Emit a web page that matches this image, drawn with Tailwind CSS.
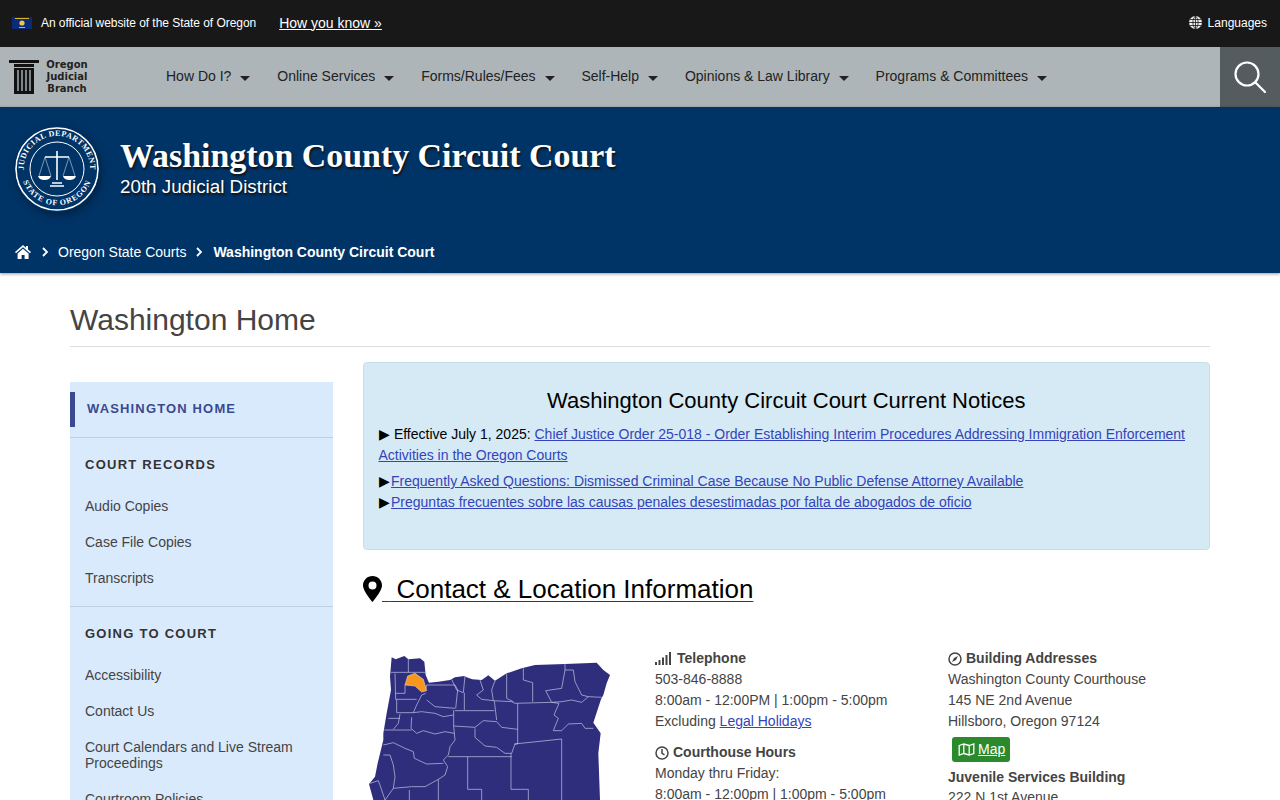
<!DOCTYPE html>
<html lang="en"><head><meta charset="utf-8"><title>Washington Home</title>
<script src="https://cdn.jsdelivr.net/npm/@tailwindcss/browser@4"></script></head>
<body class="font-['Liberation_Sans',Arial,sans-serif] bg-white text-[#444] h-[800px] overflow-hidden">
<div class="h-[47px] bg-[#181818] flex items-center justify-between pl-3 pr-[13px] pb-[2px] text-white">
  <div class="flex items-center">
    <svg width="20" height="12" viewBox="0 0 20 12" class="mr-[9px]"><rect width="20" height="12" fill="#0b2a78"/><rect x="3" y="1" width="14" height="1" fill="#d8b530"/><circle cx="10" cy="6" r="2.6" fill="#e8c84a"/><rect x="7" y="10" width="6" height="1" fill="#d8b530"/></svg>
    <span class="text-xs tracking-[-0.05px]">An official website of the State of Oregon</span>
    <a href="#" class="ml-[23px] text-sm underline">How you know »</a>
  </div>
  <div class="flex items-center gap-[6px] text-xs">
    <svg width="13" height="13" viewBox="0 0 13 13"><circle cx="6.5" cy="6.5" r="6.5" fill="#eee"/><path d="M6.5 0v13M0 6.5h13M1 3.5h11M1 9.5h11M6.5 0C3 3 3 10 6.5 13M6.5 0C10 3 10 10 6.5 13" stroke="#181818" stroke-width=".8" fill="none"/></svg>
    <span>Languages</span>
  </div>
</div>
<nav class="h-[60px] bg-[#adb5b9] flex items-center text-[#222]">
  <a href="#" class="w-[166px] shrink-0 flex items-center pl-[9px]">
    <svg width="30" height="34" viewBox="0 0 30 34" fill="#111"><rect width="30" height="3"/><rect x="5" y="4" width="20" height="3"/><path d="M5 8h20v26H5z"/><path d="M9 10v21M13 10v21M17 10v21M21 10v21" stroke="#adb5b9" stroke-width="1.4"/></svg>
    <span class="ml-[6px] w-[44px] text-center text-[10px] leading-[12px] font-bold font-['DejaVu_Sans',sans-serif] text-[#222]">Oregon Judicial Branch</span>
  </a>
  <div class="flex items-center gap-[26.9px] text-sm pb-[2px]">
    <a href="#" class="flex items-center">How Do I?<span class="ml-[9px] mt-[5px] border-x-[5px] border-x-transparent border-t-[5px] border-t-[#222]"></span></a>
    <a href="#" class="flex items-center">Online Services<span class="ml-[9px] mt-[5px] border-x-[5px] border-x-transparent border-t-[5px] border-t-[#222]"></span></a>
    <a href="#" class="flex items-center">Forms/Rules/Fees<span class="ml-[9px] mt-[5px] border-x-[5px] border-x-transparent border-t-[5px] border-t-[#222]"></span></a>
    <a href="#" class="flex items-center">Self-Help<span class="ml-[9px] mt-[5px] border-x-[5px] border-x-transparent border-t-[5px] border-t-[#222]"></span></a>
    <a href="#" class="flex items-center">Opinions &amp; Law Library<span class="ml-[9px] mt-[5px] border-x-[5px] border-x-transparent border-t-[5px] border-t-[#222]"></span></a>
    <a href="#" class="flex items-center">Programs &amp; Committees<span class="ml-[9px] mt-[5px] border-x-[5px] border-x-transparent border-t-[5px] border-t-[#222]"></span></a>
  </div>
  <div class="ml-auto w-[60px] h-full bg-[#555c60] flex items-center justify-center">
    <svg width="34" height="34" viewBox="0 0 34 34" fill="none" stroke="#fff" stroke-width="2.2"><circle cx="14" cy="14" r="11.5"/><path d="M22.5 22.5 32 32" stroke-linecap="round"/></svg>
  </div>
</nav>
<header class="h-[166px] bg-[#003366] shadow-[0_1px_3px_rgba(0,0,0,.4)] relative text-white flex flex-col">
  <div class="flex items-start pl-[15px] pt-[19px]">
    <svg width="84" height="86" viewBox="0 0 84 86" class="rounded-full shadow-[2px_3px_8px_rgba(0,0,0,.35)]">
      <defs><path id="ta" d="M11 55A33.200 33.200 0 1 1 73 55"/><path id="tb" d="M8 55A36 36 0 0 0 76 55"/></defs>
      <circle cx="42" cy="43" r="41" fill="#003366" stroke="#fff" stroke-width="1.6"/>
      <circle cx="42" cy="43" r="27" fill="none" stroke="#fff" stroke-width="1"/>
      <text fill="#fff" font-size="8" letter-spacing=".5" font-family="Liberation Serif" font-weight="700"><textPath href="#ta" startOffset="50%" text-anchor="middle">JUDICIAL DEPARTMENT</textPath></text>
      <text fill="#fff" font-size="8" letter-spacing=".8" font-family="Liberation Serif" font-weight="700"><textPath href="#tb" startOffset="50%" text-anchor="middle">STATE OF OREGON</textPath></text>
      <path d="M42 25v29M30 31h24M37 57h10M35 60h14" stroke="#fff" stroke-width="1.600" fill="none"/>
      <path d="M30 31 24 50M30 31l6 19M54 31l-6 19M54 31l6 19" stroke="#cfd8e3" stroke-width=".6" fill="none"/>
      <path d="M23 50h13q-1 4-6.500 4T23 50ZM48 50h13q-1 4-6.500 4T48 50Z" fill="#fff"/>
    </svg>
    <div class="ml-[21px] pt-[11px] [text-shadow:1px_2px_2px_#111]">
      <div class="font-['Liberation_Serif',serif] font-bold text-[33.9px] leading-[38px]">Washington County Circuit Court</div>
      <div class="text-[18.8px] leading-[24px]">20th Judicial District</div>
    </div>
  </div>
  <div class="mt-auto h-[42px] flex items-center pl-[15px] text-sm">
    <svg width="16" height="14" viewBox="0 0 16 14" fill="#fff"><path d="M8 0 0 7l1 1.2L8 2.2l7 6L16 7l-3-2.6V1h-2v1.7ZM2.600 8.500V14h4v-4h3v4h4V8.500L8 3.800Z"/></svg>
    <svg width="8" height="10" viewBox="0 0 8 10" fill="none" stroke="#fff" stroke-width="1.800" class="ml-[10px] mr-[9px]"><path d="m2 1 4 4-4 4"/></svg>
    <a href="#">Oregon State Courts</a>
    <svg width="8" height="10" viewBox="0 0 8 10" fill="none" stroke="#fff" stroke-width="1.800" class="ml-[9px] mr-[10px]"><path d="m2 1 4 4-4 4"/></svg>
    <a href="#" class="font-bold">Washington County Circuit Court</a>
  </div>
</header>
<main class="w-[1140px] mx-auto">
  <h1 class="pt-[27px] h-[74px] text-[30px] leading-[40px] text-[#444] border-b border-[#ddd]">Washington Home</h1>
  <div class="flex gap-[30px] items-start pt-[15px]">
    <aside class="w-[263px] shrink-0 mt-[20px] bg-[#d9eafd] text-sm">
      <div class="pt-[10px] pb-[10px] border-b border-[#bccfe4]">
        <a href="#" class="flex items-center h-[35px] border-l-[5px] border-[#3b4a8f] pl-[12px] font-bold text-[#3b4a8f] tracking-[1.150px] text-[13px]">WASHINGTON HOME</a>
      </div>
      <div class="px-[15px] pt-[19px] pb-[10px] border-b border-[#bccfe4]">
        <h2 class="font-bold text-[#333] text-[13px] leading-[16px] tracking-[1.250px] mb-[15px]">COURT RECORDS</h2>
        <a href="#" class="block py-[10px] leading-[16px]">Audio Copies</a>
        <a href="#" class="block py-[10px] leading-[16px]">Case File Copies</a>
        <a href="#" class="block py-[10px] leading-[16px]">Transcripts</a>
      </div>
      <div class="px-[15px] pt-[19px]">
        <h2 class="font-bold text-[#333] text-[13px] leading-[16px] tracking-[1.250px] mb-[15px]">GOING TO COURT</h2>
        <a href="#" class="block py-[10px] leading-[16px]">Accessibility</a>
        <a href="#" class="block py-[10px] leading-[16px]">Contact Us</a>
        <a href="#" class="block py-[10px] leading-[16px]">Court Calendars and Live Stream Proceedings</a>
        <a href="#" class="block py-[10px] leading-[16px]">Courtroom Policies</a>
      </div>
    </aside>
    <section class="flex-1 min-w-0">
      <div class="h-[188px] bg-[#d6eaf5] border border-[#c5dfe8] rounded-[4px] pl-[14.5px] pr-[15px] pt-[21px] text-sm leading-[21px] text-black">
        <h3 class="text-center text-[22px] leading-[34px] mb-[6px]">Washington County Circuit Court Current Notices</h3>
        <p class="mb-[5px]">▶ <span class="ml-[.5px]">Effective July 1, 2025:</span> <a href="#" class="text-[#3344bb] underline">Chief Justice Order 25-018 - Order Establishing Interim Procedures Addressing Immigration Enforcement Activities in the Oregon Courts</a></p>
        <p>▶<a href="#" class="ml-[1.5px] text-[#3344bb] underline">Frequently Asked Questions: Dismissed Criminal Case Because No Public Defense Attorney Available</a></p>
        <p>▶<a href="#" class="ml-[1.5px] text-[#3344bb] underline">Preguntas frecuentes sobre las causas penales desestimadas por falta de abogados de oficio</a></p>
      </div>
      <h2 class="mt-[21px] flex items-center text-[26px] leading-[36px] text-black h-[36px]">
        <svg width="19" height="26" viewBox="0 0 19 26" class="shrink-0"><path fill-rule="evenodd" d="M9.500 0C4.200 0 0 4.200 0 9.500 0 15 9.500 26 9.500 26S19 15 19 9.500C19 4.200 14.800 0 9.500 0Zm0 5.500a4 4 0 1 1 0 8 4 4 0 0 1 0-8Z"/></svg>
        <a href="#" class="whitespace-pre underline decoration-[#2233aa] decoration-1 underline-offset-[3px]"> <span class="text-black"> Contact &amp; Location Information</span></a>
      </h2>
      <div class="flex mt-[41px]">
        <div class="w-[300px] shrink-0 -ml-[8px]">
          <svg width="270" height="160" viewBox="0 0 810 480" class="block -mt-[8px]">
            <path fill="#2f2e7c" d="M110 52L122 58L148 48L160 58L195 55L208 65L212 105L222 128L250 125L285 120L300 112L328 108L335 112L352 118L380 120L400 106L420 122L455 100L500 85L540 75L630 72L725 68L745 90L765 105L755 130L745 165L738 178L715 248L737 280L730 340L735 480H55L42 432L60 410L68 370L85 300L85 280L95 220L108 150L105 110Z"/>
            <g fill="none" stroke="#c9cbe8" stroke-width="2" stroke-linejoin="round">
              <path d="M108 97H215M160 56V97M120 100L122 178H185M150 135V160H122M125 178V218H175M212 150L215 135H300L308 150L302 205M135 222L130 250L115 268M88 270H170M100 235H135"/>
              <path d="M175 218L185 195L200 165L212 160M215 180L240 200L300 205M175 218L200 215L240 220L265 230L295 225M170 232L168 265L185 280L205 272L240 282L270 275L298 280M296 210V260L300 300L285 320L280 345L265 360L278 380L270 405L250 418L210 440L170 440L115 445"/>
              <path d="M85 315L115 308L150 325L175 335L178 355L215 372L265 370M85 345H105L115 375L120 410L115 445M45 430L70 422L80 450L90 480M115 445L90 480M163 450V480M250 418V480"/>
              <path d="M280 350H470M338 350V448H380V480M468 340V448H520V480M478 312L620 297V480M300 212H418M296 258L360 262L385 242L425 245L440 262L488 268M360 265V292L390 318L425 322L450 340H470L480 312H488V190M418 183L425 240M415 182L470 185L480 190L590 187"/>
              <path d="M290 118L305 150L325 158L330 108M328 158V210M375 120L385 150L365 165L380 178L415 182L410 150L420 122M455 100V175L475 185M505 85V120L533 128V185"/>
              <path d="M630 72V90H655L660 125L680 165L700 170L740 172M630 90L620 145L572 152L590 187L612 190L597 225L610 235L595 272H620L640 252L680 250L690 265L715 265M590 187L620 185L650 180L680 187L700 170"/>
            </g>
            <path fill="#f7971e" stroke="#e9e9f5" stroke-width="1.500" d="M150 135L158 108L180 100L205 118L215 152L200 156L180 138Z"/>
          </svg>
        </div>
        <div class="w-[293px] shrink-0 text-sm leading-[21px]">
          <h4 class="flex items-center font-bold"><svg width="17" height="13" viewBox="0 0 17 13" fill="#444" class="mr-[5px]"><path d="M0 10h2v3H0zM3.500 8h2v5h-2zM7 5.500h2V13H7zM10.500 3h2v10h-2zM14 0h2v13h-2z"/></svg>Telephone</h4>
          <p>503-846-8888</p>
          <p>8:00am - 12:00PM | 1:00pm - 5:00pm</p>
          <p>Excluding <a href="#" class="text-[#3344bb] underline">Legal Holidays</a></p>
          <h4 class="flex items-center font-bold mt-[10px]"><svg width="14" height="14" viewBox="0 0 14 14" fill="none" stroke="#444" stroke-width="1.500" class="mr-[4px]"><circle cx="7" cy="7" r="6"/><path d="M7 3v4.300l2.500 1.500"/></svg>Courthouse Hours</h4>
          <p>Monday thru Friday:</p>
          <p>8:00am - 12:00pm | 1:00pm - 5:00pm</p>
        </div>
        <div class="flex-1 text-sm leading-[21px]">
          <h4 class="flex items-center font-bold"><svg width="14" height="14" viewBox="0 0 14 14" class="mr-[4px]"><circle cx="7" cy="7" r="6" fill="none" stroke="#444" stroke-width="1.500"/><path d="m10 4-4 2-2 4 4-2Z" fill="#444"/></svg>Building Addresses</h4>
          <p>Washington County Courthouse</p>
          <p>145 NE 2nd Avenue</p>
          <p>Hillsboro, Oregon 97124</p>
          <a href="#" class="inline-flex items-center ml-[4px] mt-[5px] h-[25px] pl-[6px] pr-[5px] rounded-[3px] bg-[#2b8a2b] text-white underline"><svg width="17" height="13" viewBox="0 0 16 13" fill="none" stroke="#fff" stroke-width="1.300" class="mr-[3px]"><path d="M.7 2.500 5.300 1l5.400 1.500L15.300 1v9.500L10.700 12l-5.400-1.500L.7 12ZM5.300 1v9.500M10.700 2.500V12"/></svg>Map</a>
          <h4 class="font-bold mt-[5px]">Juvenile Services Building</h4>
          <p class="-mt-[1px]">222 N 1st Avenue</p>
        </div>
      </div>
    </section>
  </div>
</main>
</body></html>
